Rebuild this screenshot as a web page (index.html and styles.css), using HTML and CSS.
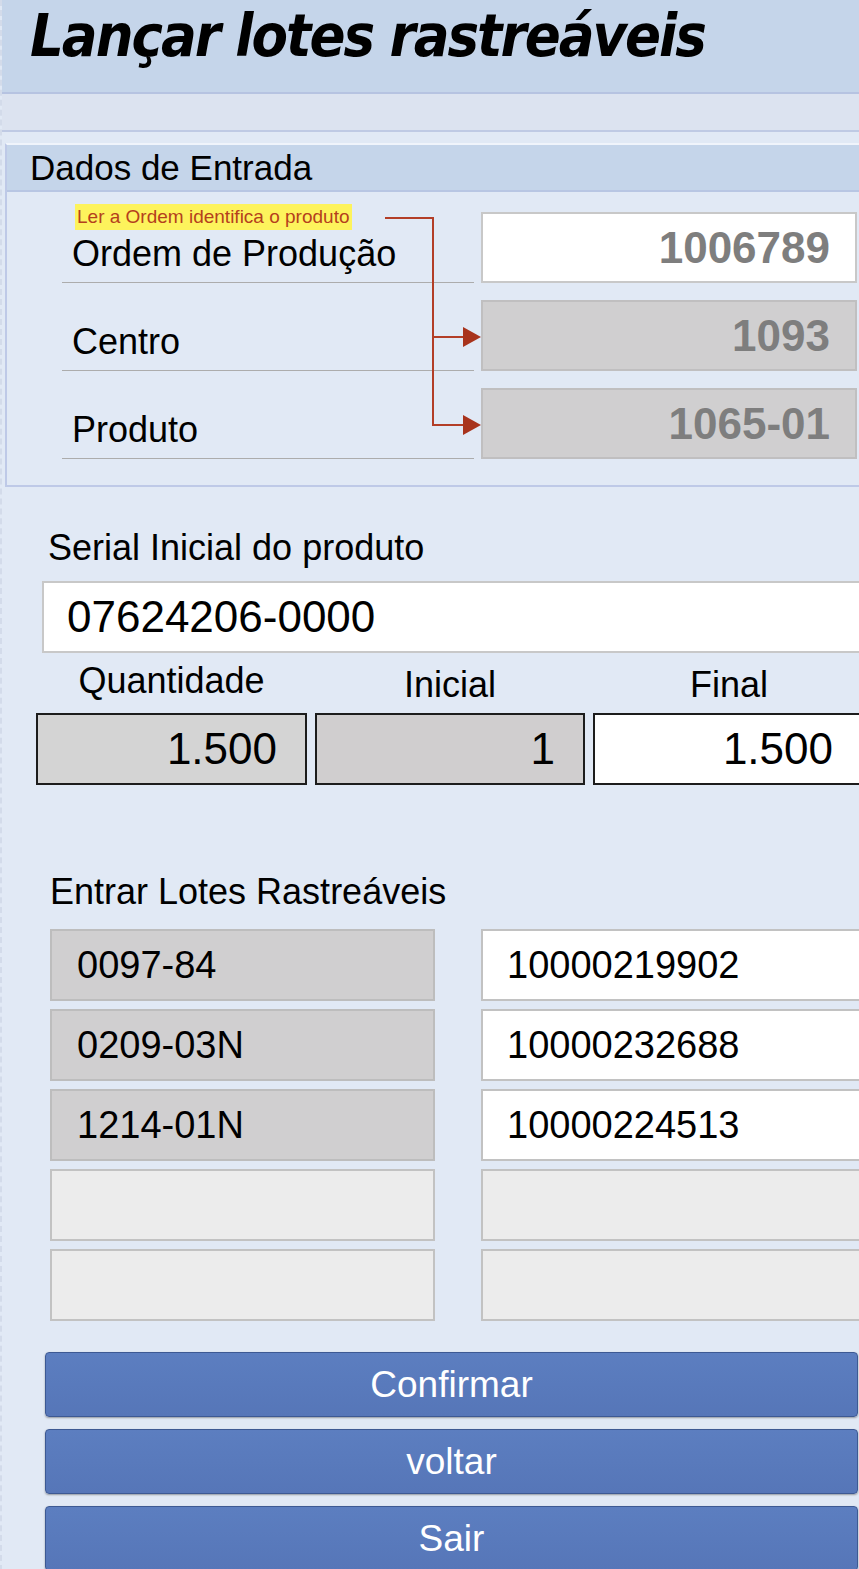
FILE: index.html
```html
<!DOCTYPE html>
<html lang="pt-BR">
<head>
  <meta charset="UTF-8" />
  <title>Lançar lotes rastreáveis</title>
  <link rel="stylesheet" href="styles.css">
</head>
<body>

  <div class="tela">
    <header class="titulo">
      <h1>Lançar lotes rastreáveis</h1>
    </header>
    <div class="faixa"></div>

    <section class="entrada">
      <h2>Dados de Entrada</h2>
      <div class="campos">
        <div class="linha">
          <span class="rotulo">Ordem de Produção</span>
          <div class="campo editavel">1006789</div>
        </div>
        <div class="linha">
          <span class="rotulo">Centro</span>
          <div class="campo bloqueado">1093</div>
        </div>
        <div class="linha">
          <span class="rotulo">Produto</span>
          <div class="campo bloqueado">1065-01</div>
        </div>

        <!-- anotação sobre o fluxo da ordem -->
        <span class="nota">Ler a Ordem identifica o produto</span>
        <svg class="setas" width="104" height="230" viewBox="0 0 104 230">
          <path d="M5 8 H53 V215 H85 M53 127 H85" fill="none" stroke="#b33e27" stroke-width="2" />
          <polygon points="83,117 101,127 83,137" fill="#a8331c" />
          <polygon points="83,205 101,215 83,225" fill="#a8331c" />
        </svg>
      </div>
    </section>

    <div class="conteudo">
      <div class="legenda serial-leg">Serial Inicial do produto</div>
      <div class="serial">07624206-0000</div>

      <div class="qtd">
        <div class="qtd-col">
          <span class="qtd-leg">Quantidade</span>
          <div class="caixa cinza-claro">1.500</div>
        </div>
        <div class="qtd-col">
          <span class="qtd-leg">Inicial</span>
          <div class="caixa cinza">1</div>
        </div>
        <div class="qtd-col">
          <span class="qtd-leg">Final</span>
          <div class="caixa branca">1.500</div>
        </div>
      </div>

      <div class="legenda lotes-leg">Entrar Lotes Rastreáveis</div>
      <div class="lotes">
        <div class="lote item">0097-84</div>
        <div class="lote valor">10000219902</div>
        <div class="lote item">0209-03N</div>
        <div class="lote valor">10000232688</div>
        <div class="lote item">1214-01N</div>
        <div class="lote valor">10000224513</div>
        <div class="lote vazio"></div>
        <div class="lote vazio"></div>
        <div class="lote vazio"></div>
        <div class="lote vazio"></div>
      </div>

      <div class="botoes">
        <button>Confirmar</button>
        <button>voltar</button>
        <button>Sair</button>
      </div>
    </div>
  </div>

</body>
</html>
```

FILE: styles.css
```css
* { box-sizing: border-box; margin: 0; padding: 0; }

body {
  font-family: 'Liberation Sans', Arial, sans-serif;
  background: #e1e9f5;
  color: #000;
}

.tela {
  min-height: 1569px;
  border-left: 2px dashed #d3dbea;
  overflow: hidden;
}

/* Barra de título */
.titulo {
  background: #c5d5ea;
  height: 92px;
  padding-left: 28px;
}

.titulo h1 {
  font-family: 'DejaVu Sans Condensed', 'DejaVu Sans', sans-serif;
  font-size: 59px;
  line-height: 72px;
  font-style: italic;
  font-weight: bold;
  letter-spacing: -2px;
}

.faixa {
  height: 40px;
  background: #dce3f0;
  border-top: 2px solid #b6c3e1;
  border-bottom: 2px solid #bfcae4;
  margin-bottom: 11px;
}

/* Dados de Entrada */
.entrada {
  margin-left: 3px;
  border-left: 2px solid #bec9e7;
  border-top: 2px solid #f0f4fb;
  border-bottom: 2px solid #bec9e7;
}

.entrada h2 {
  height: 47px;
  background: #c5d5ea;
  border-bottom: 2px solid #b8c6e3;
  padding-left: 23px;
  font-size: 35px;
  line-height: 45px;
  font-weight: normal;
}

.campos {
  position: relative;
  display: flex;
  flex-direction: column;
  gap: 17px;
  padding: 20px 0 26px;
}

.linha {
  display: flex;
  height: 71px;
  gap: 7px;
}

.rotulo {
  width: 412px;
  margin-left: 55px;
  padding: 0 0 7px 10px;
  display: flex;
  align-items: flex-end;
  border-bottom: 1px solid #acacac;
  font-size: 36px;
  line-height: 43px;
}

.campo {
  flex: 0 0 376px;
  display: flex;
  align-items: center;
  justify-content: flex-end;
  padding-right: 25px;
  border: 2px solid #c8c8c8;
  font-size: 44px;
  font-weight: bold;
  color: #7e7e7e;
}

.campo.editavel { background: #fff; }
.campo.bloqueado { background: #d0cfd0; border-color: #c0bfc0; }

.nota {
  position: absolute;
  left: 68px;
  top: 12px;
  height: 26px;
  padding: 0 2px;
  background: #fdf35c;
  color: #b4401c;
  font-size: 19px;
  line-height: 26px;
}

.setas {
  position: absolute;
  left: 373px;
  top: 18px;
}

/* Serial e quantidades */
.conteudo {
  padding-left: 34px;
}

.legenda {
  font-size: 36px;
  line-height: 43px;
}

.serial-leg { margin: 39px 0 0 12px; }

.serial {
  height: 72px;
  margin: 12px 0 0 6px;
  padding-left: 23px;
  display: flex;
  align-items: center;
  background: #fff;
  border: 2px solid #c8c8c8;
  border-right: none;
  font-size: 44px;
}

.qtd {
  display: grid;
  grid-template-columns: 271px 270px 1fr;
  gap: 8px;
  margin: 10px -6px 0 0;
}

.qtd-col {
  display: flex;
  flex-direction: column;
  gap: 7px;
}

.qtd-leg {
  text-align: center;
  font-size: 36px;
  line-height: 43px;
}

.qtd-col:first-child .qtd-leg { margin-top: -4px; margin-bottom: 4px; }

.caixa {
  height: 72px;
  display: flex;
  align-items: center;
  justify-content: flex-end;
  padding-right: 28px;
  border: 2px solid #1c1c1c;
  font-size: 44px;
}

.cinza-claro { background: #d4d4d4; }
.cinza { background: #d0cecf; }
.branca { background: #fff; padding-right: 30px; }

/* Lotes rastreáveis */
.lotes-leg { margin: 85px 0 0 14px; }

.lotes {
  display: grid;
  grid-template-columns: 385px 1fr;
  grid-auto-rows: 72px;
  column-gap: 46px;
  row-gap: 8px;
  margin: 16px -6px 0 14px;
}

.lote {
  display: flex;
  align-items: center;
  border: 2px solid #c2c2c2;
  font-size: 38px;
}

.lote.item { background: #d0cfd0; padding-left: 25px; border-color: #bdbdbd; }
.lote.valor { background: #fff; padding-left: 24px; }
.lote.vazio { background: #ececec; }

/* Botões */
.botoes {
  display: flex;
  flex-direction: column;
  gap: 12px;
  margin: 31px 0 0 9px;
  width: 813px;
}

.botoes button {
  height: 65px;
  background: linear-gradient(to bottom, #5c7ec0, #5676b8);
  border: 1px solid #3d5993;
  border-radius: 4px;
  box-shadow: 0 1px 2px rgba(0,0,0,0.35);
  color: #fff;
  font-family: 'Liberation Sans', Arial, sans-serif;
  font-size: 37px;
  cursor: pointer;
}
```
